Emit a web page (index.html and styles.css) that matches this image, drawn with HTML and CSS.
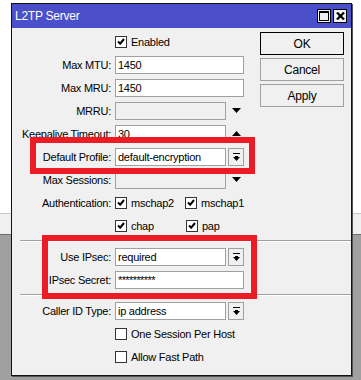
FILE: index.html
```html
<!DOCTYPE html>
<html lang="en">
<head>
    <meta charset="UTF-8">
    <meta name="viewport" content="width=device-width, initial-scale=1.0">
    <title>L2TP Server</title>
    <link rel="stylesheet" href="styles.css">
</head>
<body>
    <div class="window">
        <div class="titlebar">
            <span class="title">L2TP Server</span>
            <div class="title-btns">
                <span class="tbtn">
                    <svg width="10" height="10" viewBox="0 0 10 10"><rect x="0.5" y="0.5" width="9" height="9" fill="none" stroke="#000"/><rect x="0" y="0" width="10" height="2" fill="#000"/></svg>
                </span>
                <span class="tbtn">
                    <svg width="9" height="8" viewBox="0 0 9 8"><path d="M1 0.5 L8 7.5 M8 0.5 L1 7.5" stroke="#000" stroke-width="2.2" fill="none"/></svg>
                </span>
            </div>
        </div>

        <div class="content">
            <div class="section">
                <div class="form">
                    <div class="ctrl">
                        <label class="check"><span class="box on"></span>Enabled</label>
                    </div>

                    <span class="label">Max MTU:</span>
                    <div class="ctrl"><span class="input">1450</span></div>

                    <span class="label">Max MRU:</span>
                    <div class="ctrl"><span class="input">1450</span></div>

                    <span class="label">MRRU:</span>
                    <div class="ctrl"><span class="input short off"></span><span class="arrow down"></span></div>

                    <span class="label">Keepalive Timeout:</span>
                    <div class="ctrl"><span class="input short">30</span><span class="arrow up"></span></div>

                    <span class="label">Default Profile:</span>
                    <div class="ctrl"><span class="input short">default-encryption</span><span class="dd"></span></div>

                    <span class="label">Max Sessions:</span>
                    <div class="ctrl"><span class="input short off"></span><span class="arrow down"></span></div>

                    <span class="label">Authentication:</span>
                    <div class="ctrl">
                        <label class="check wide"><span class="box on"></span>mschap2</label>
                        <label class="check"><span class="box on"></span>mschap1</label>
                    </div>

                    <div class="ctrl">
                        <label class="check wide"><span class="box on"></span>chap</label>
                        <label class="check"><span class="box on"></span>pap</label>
                    </div>
                </div>

                <div class="actions">
                    <button class="btn default">OK</button>
                    <button class="btn">Cancel</button>
                    <button class="btn">Apply</button>
                </div>
            </div>

            <div class="separator"></div>

            <div class="form">
                <span class="label">Use IPsec:</span>
                <div class="ctrl"><span class="input short">required</span><span class="dd"></span></div>

                <span class="label">IPsec Secret:</span>
                <div class="ctrl"><span class="input secret">**********</span></div>
            </div>

            <div class="separator"></div>

            <div class="form">
                <span class="label">Caller ID Type:</span>
                <div class="ctrl"><span class="input short">ip address</span><span class="dd"></span></div>

                <div class="ctrl">
                    <label class="check"><span class="box"></span>One Session Per Host</label>
                </div>

                <div class="ctrl">
                    <label class="check"><span class="box"></span>Allow Fast Path</label>
                </div>
            </div>
        </div>

        <!-- red highlight frames drawn over the dialog -->
        <div class="mark mark-profile"></div>
        <div class="mark mark-ipsec"></div>
    </div>
</body>
</html>
```

FILE: styles.css
```css
body {
    margin: 0;
    font-family: "Liberation Sans", Arial, sans-serif;
    font-size: 11px;
    letter-spacing: -0.25px;
    color: #000;
    background: linear-gradient(to bottom,
        #fff 0, #fff 213px,
        #c8c8c8 213px, #c8c8c8 214px,
        #f0f0f0 214px, #f0f0f0 234px,
        #6e6e6e 234px, #6e6e6e 235px,
        #a0a0a0 235px);
    height: 380px;
    overflow: hidden;
}
.window {
    position: relative;
    box-sizing: border-box;
    margin: 3px 0 0 11px;
    width: 341px;
    height: 373px;
    border: 1px solid #111;
    box-shadow: 1px 1px 0 #555;
    background: #f0f0f0;
}
.titlebar {
    height: 24px;
    background: #4b4fc9;
    display: flex;
    align-items: center;
    justify-content: space-between;
    padding: 0 4px 0 3px;
}
.title {
    color: #fff;
    font-size: 12px;
}
.title-btns {
    display: flex;
    gap: 2px;
}
.tbtn {
    box-sizing: border-box;
    width: 14px;
    height: 14px;
    background: #f0f0f0;
    border: 1px solid #000;
    display: flex;
    align-items: center;
    justify-content: center;
}
.tbtn svg {
    display: block;
}
.content {
    padding-top: 2px;
}
.section {
    display: flex;
}
.form {
    display: grid;
    grid-template-columns: 103px 129px;
    grid-auto-rows: 23px;
    align-items: center;
    width: 248px;
}
.label {
    grid-column: 1;
    text-align: right;
    padding-right: 4px;
    white-space: nowrap;
}
.ctrl {
    grid-column: 2;
    display: flex;
    align-items: center;
}
.input {
    box-sizing: border-box;
    width: 129px;
    height: 18px;
    line-height: 16px;
    padding-left: 2px;
    background: #fff;
    border: 1px solid #a0a0a0;
    white-space: nowrap;
    overflow: hidden;
}
.input.short {
    width: 111px;
}
.input.off {
    background: #f0f0f0;
}
.input.secret {
    letter-spacing: -0.6px;
}
.dd {
    box-sizing: border-box;
    width: 16px;
    height: 18px;
    margin-left: 2px;
    border: 1px solid #a0a0a0;
    background: #f0f0f0 url("data:image/svg+xml,%3Csvg xmlns='http://www.w3.org/2000/svg' width='7' height='8'%3E%3Crect width='7' height='1' fill='%23000'/%3E%3Cpath d='M2 3h3v1h2l-3.5 4L0 4h2z' fill='%23000'/%3E%3C/svg%3E") no-repeat center;
}
.arrow {
    width: 18px;
    height: 18px;
    background-repeat: no-repeat;
    background-position: 6px center;
}
.arrow.down {
    background-image: url("data:image/svg+xml,%3Csvg xmlns='http://www.w3.org/2000/svg' width='9' height='5'%3E%3Cpath d='M0 0h9L4.5 5z' fill='%23000'/%3E%3C/svg%3E");
}
.arrow.up {
    background-image: url("data:image/svg+xml,%3Csvg xmlns='http://www.w3.org/2000/svg' width='9' height='5'%3E%3Cpath d='M0 5h9L4.5 0z' fill='%23000'/%3E%3C/svg%3E");
}
.check {
    display: flex;
    align-items: center;
    white-space: nowrap;
}
.check.wide {
    width: 71px;
}
.box {
    box-sizing: border-box;
    width: 12px;
    height: 12px;
    margin-right: 4px;
    border: 1px solid #333;
    background: #fff;
}
.box.on {
    background: #fff url("data:image/svg+xml,%3Csvg xmlns='http://www.w3.org/2000/svg' width='8' height='7'%3E%3Cpath d='M1 3.5l2.2 2.2L7 1' stroke='%23000' stroke-width='2' fill='none'/%3E%3C/svg%3E") no-repeat center;
}
.actions {
    display: flex;
    flex-direction: column;
    gap: 3px;
    padding-top: 2px;
}
.btn {
    box-sizing: border-box;
    width: 84px;
    height: 23px;
    padding: 0;
    font: inherit;
    letter-spacing: inherit;
    font-size: 12px;
    color: #000;
    background: #f0f0f0;
    border: 1px solid #a0a0a0;
}
.btn.default {
    border-color: #000;
}
.separator {
    height: 8px;
    margin-left: 8px;
    box-sizing: border-box;
    padding-top: 3px;
}
.separator::before {
    content: "";
    display: block;
    border-top: 1px solid #a0a0a0;
    border-bottom: 1px solid #fff;
}
.mark {
    position: absolute;
    box-sizing: border-box;
    border: 6px solid #ed1c24;
}
.mark-profile {
    left: 18px;
    top: 133px;
    width: 225px;
    height: 37px;
}
.mark-ipsec {
    left: 30px;
    top: 231px;
    width: 215px;
    height: 64px;
}
```
